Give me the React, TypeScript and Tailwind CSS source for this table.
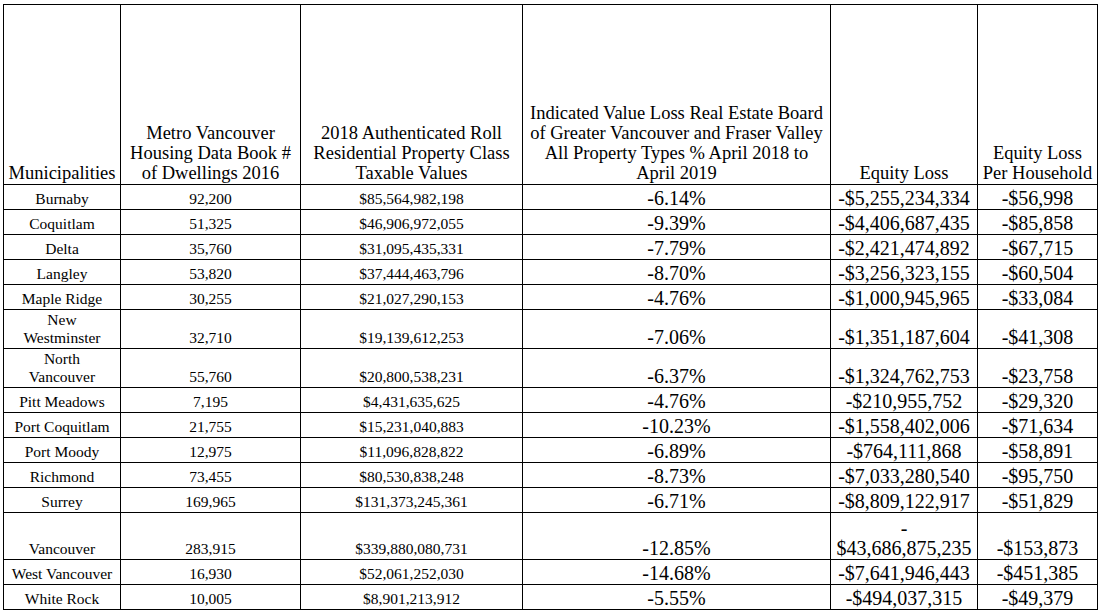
import React from 'react'

type Row = {
  name: React.ReactNode
  dwellings: string
  taxable: string
  pct: string
  loss: React.ReactNode
  perHh: string
  h: string
}

const ROWS: Row[] = [
  { name: 'Burnaby', dwellings: '92,200', taxable: '$85,564,982,198', pct: '-6.14%', loss: '-$5,255,234,334', perHh: '-$56,998', h: 'h-[25px]' },
  { name: 'Coquitlam', dwellings: '51,325', taxable: '$46,906,972,055', pct: '-9.39%', loss: '-$4,406,687,435', perHh: '-$85,858', h: 'h-[25px]' },
  { name: 'Delta', dwellings: '35,760', taxable: '$31,095,435,331', pct: '-7.79%', loss: '-$2,421,474,892', perHh: '-$67,715', h: 'h-[25px]' },
  { name: 'Langley', dwellings: '53,820', taxable: '$37,444,463,796', pct: '-8.70%', loss: '-$3,256,323,155', perHh: '-$60,504', h: 'h-[25px]' },
  { name: 'Maple Ridge', dwellings: '30,255', taxable: '$21,027,290,153', pct: '-4.76%', loss: '-$1,000,945,965', perHh: '-$33,084', h: 'h-[25px]' },
  { name: <>New<br />Westminster</>, dwellings: '32,710', taxable: '$19,139,612,253', pct: '-7.06%', loss: '-$1,351,187,604', perHh: '-$41,308', h: 'h-[39px]' },
  { name: <>North<br />Vancouver</>, dwellings: '55,760', taxable: '$20,800,538,231', pct: '-6.37%', loss: '-$1,324,762,753', perHh: '-$23,758', h: 'h-[39px]' },
  { name: 'Pitt Meadows', dwellings: '7,195', taxable: '$4,431,635,625', pct: '-4.76%', loss: '-$210,955,752', perHh: '-$29,320', h: 'h-[25px]' },
  { name: 'Port Coquitlam', dwellings: '21,755', taxable: '$15,231,040,883', pct: '-10.23%', loss: '-$1,558,402,006', perHh: '-$71,634', h: 'h-[25px]' },
  { name: 'Port Moody', dwellings: '12,975', taxable: '$11,096,828,822', pct: '-6.89%', loss: '-$764,111,868', perHh: '-$58,891', h: 'h-[25px]' },
  { name: 'Richmond', dwellings: '73,455', taxable: '$80,530,838,248', pct: '-8.73%', loss: '-$7,033,280,540', perHh: '-$95,750', h: 'h-[25px]' },
  { name: 'Surrey', dwellings: '169,965', taxable: '$131,373,245,361', pct: '-6.71%', loss: '-$8,809,122,917', perHh: '-$51,829', h: 'h-[25px]' },
  { name: 'Vancouver', dwellings: '283,915', taxable: '$339,880,080,731', pct: '-12.85%', loss: <>-<br />$43,686,875,235</>, perHh: '-$153,873', h: 'h-[47px]' },
  { name: 'West Vancouver', dwellings: '16,930', taxable: '$52,061,252,030', pct: '-14.68%', loss: '-$7,641,946,443', perHh: '-$451,385', h: 'h-[25px]' },
  { name: 'White Rock', dwellings: '10,005', taxable: '$8,901,213,912', pct: '-5.55%', loss: '-$494,037,315', perHh: '-$49,379', h: 'h-[25px]' },
]

const cell = 'border border-black px-[4px] align-bottom text-center whitespace-nowrap'
const small = 'text-[15.5px] leading-[18px] pb-[1px]'
const big = 'text-[20px] leading-[20px] pb-[1px]'

export default function App() {
  return (
    <div className="bg-white min-h-[610px] pl-[3px] pt-[4px] text-black [font-family:'Liberation_Serif','Times_New_Roman',serif]">
      <table className="table-fixed border-collapse w-[1094px]">
        <colgroup>
          <col className="w-[117px]" />
          <col className="w-[180px]" />
          <col className="w-[222px]" />
          <col className="w-[308px]" />
          <col className="w-[147px]" />
          <col className="w-[120px]" />
        </colgroup>
        <thead>
          <tr className="h-[180px] text-[18.5px] leading-[20px]">
            <th className={`${cell} font-normal pb-[1px] px-0`}>Municipalities</th>
            <th className={`${cell} font-normal pb-[1px]`}>
              Metro Vancouver<br />Housing Data Book #<br />of Dwellings 2016
            </th>
            <th className={`${cell} font-normal pb-[1px]`}>
              2018 Authenticated Roll<br />Residential Property Class<br />Taxable Values
            </th>
            <th className={`${cell} font-normal pb-[1px]`}>
              Indicated Value Loss Real Estate Board<br />of Greater Vancouver and Fraser Valley<br />All Property Types % April 2018 to<br />April 2019
            </th>
            <th className={`${cell} font-normal pb-[1px]`}>Equity Loss</th>
            <th className={`${cell} font-normal pb-[1px] px-0`}>
              Equity Loss<br />Per Household
            </th>
          </tr>
        </thead>
        <tbody>
          {ROWS.map((r) => (
            <tr key={r.dwellings} className={r.h}>
              <td className={`${cell} ${small} px-0`}>{r.name}</td>
              <td className={`${cell} ${small}`}>{r.dwellings}</td>
              <td className={`${cell} ${small}`}>{r.taxable}</td>
              <td className={`${cell} ${big}`}>{r.pct}</td>
              <td className={`${cell} ${big} px-0`}>{r.loss}</td>
              <td className={`${cell} ${big} px-0`}>{r.perHh}</td>
            </tr>
          ))}
        </tbody>
      </table>
    </div>
  )
}
